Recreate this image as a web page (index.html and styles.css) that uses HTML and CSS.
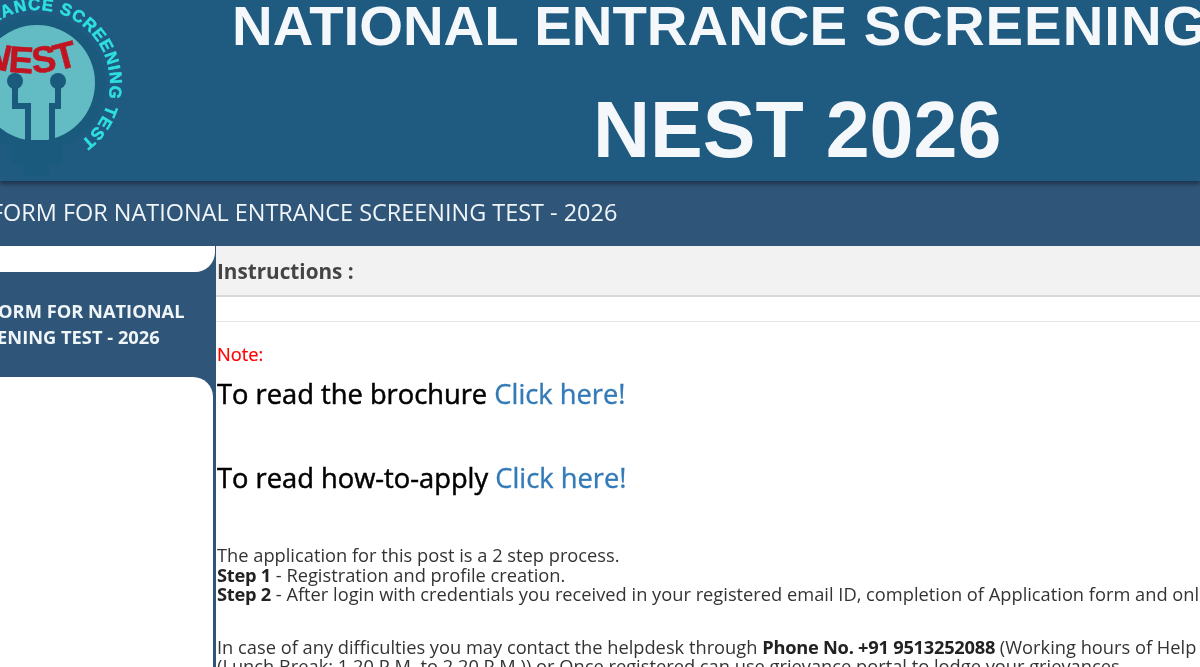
FILE: index.html
```html
<!DOCTYPE html>
<html lang="en">
<head>
<meta charset="utf-8">
<title>NEST 2026</title>
<link rel="stylesheet" href="styles.css">
</head>
<body>
<div class="page">
  <header class="banner">
    <svg class="logo" width="216" height="181" viewBox="0 0 216 181" aria-label="NEST logo">
      <defs>
        <path id="ring" d="M-6 142 A73 73 0 1 1 80 142"/>
        <path id="smile" d="M-18 65 Q35 82 86 62"/>
      </defs>
      <circle cx="37" cy="83" r="68" fill="#1a5a7c"/>
      <circle cx="37" cy="83" r="58" fill="#63bcc4"/>
      <path d="M12 140H62V165H50V175H24V165H12Z" fill="#1a5a7c"/>
      <path d="M15 85V106H28V142M58 85V106H52V142" fill="none" stroke="#1a5a7c" stroke-width="6"/>
      <circle cx="15" cy="81" r="8" fill="#1a5a7c"/>
      <circle cx="58" cy="81" r="8" fill="#1a5a7c"/>
      <text class="logo-ring"><textPath href="#ring" textLength="365">NATIONAL ENTRANCE SCREENING TEST</textPath></text>
      <text class="logo-nest"><textPath href="#smile">NEST</textPath></text>
    </svg>
    <div class="banner-titles">
      <div class="banner-line1">NATIONAL ENTRANCE <span class="wide">SCREENING</span> TEST</div>
      <div class="banner-line2">NEST 2026</div>
    </div>
  </header>
  <div class="titlebar">FORM FOR NATIONAL ENTRANCE SCREENING TEST - 2026</div>
  <div class="columns">
    <aside class="sidebar">
      <div class="side-top"></div>
      <div class="side-active">
        <span class="side-line first">FORM FOR NATIONAL</span>
        <span class="side-line second">SCREENING TEST - 2026</span>
      </div>
      <div class="side-rest"></div>
    </aside>
    <main class="content">
      <div class="panel-head">Instructions :</div>
      <div class="panel-gap"></div>
      <div class="panel-body">
        <div class="note">Note:</div>
        <p class="big first-big">To read the brochure <a href="#">Click here!</a></p>
        <p class="big second-big">To read how-to-apply <a href="#">Click here!</a></p>
        <p class="para">The application for this post is a 2 step process.<br>
        <b>Step 1</b> - Registration and profile creation.<br>
        <b>Step 2</b> - After login with credentials you received in your registered email ID, completion of Application form and online payment.</p>
        <p class="para last">In case of any difficulties you may contact the helpdesk through <b>Phone No. +91 9513252088</b> (Working hours of Help Desk<br>
        (Lunch Break: 1.20 P.M. to 2.20 P.M.)) or Once registered can use grievance portal to lodge your grievances.</p>
      </div>
    </main>
  </div>
</div>
</body>
</html>
```
FILE: styles.css
```css
* { box-sizing: border-box; }
html, body { margin: 0; padding: 0; background: #fff; }
.page {
  width: 1200px;
  height: 667px;
  overflow: hidden;
  font-family: "Open Sans", "Liberation Sans", sans-serif;
  color: #333;
  filter: blur(.4px);
}
.banner {
  display: flex;
  height: 181px;
  background: #1f5a80;
  box-shadow: 0 3px 4px rgba(20, 30, 50, .6);
  position: relative;
}
.logo { flex: none; }
.logo-ring {
  font: bold 17px "Liberation Sans", sans-serif;
  fill: #2fdfe2;
  stroke: #2fdfe2;
  stroke-width: .5px;
}
.logo-nest {
  font: bold 37px "Liberation Sans", sans-serif;
  fill: #c01420;
  stroke: #c01420;
  stroke-width: .6px;
}
.banner-titles {
  flex: none;
  width: 1200px;
  color: #f5f8fa;
  font-family: "Liberation Sans", sans-serif;
  font-weight: bold;
  white-space: nowrap;
}
.banner-line1 {
  font-size: 56.3px;
  line-height: 52px;
  margin-left: 16px;
  word-spacing: 1px;
}
.wide { letter-spacing: 1px; }
.banner-line2 {
  font-size: 79px;
  line-height: 90px;
  margin-top: 33px;
  margin-left: 377px;
}
.titlebar {
  height: 65px;
  line-height: 63px;
  background: #2f5579;
  color: #f0f5f8;
  font-size: 23.44px;
  text-indent: -9px;
  white-space: nowrap;
}
.columns {
  display: flex;
  height: 421px;
}
.sidebar {
  flex: none;
  width: 216px;
  display: flex;
  flex-direction: column;
  background: #2f5579;
}
.side-top {
  height: 26px;
  background: #fff;
  border-bottom-right-radius: 20px;
  margin-right: 1px;
}
.side-active {
  height: 105px;
  padding-top: 26px;
  color: #f0f5f8;
  font-size: 18.3px;
  font-weight: 700;
  line-height: 26px;
  white-space: nowrap;
  overflow: hidden;
}
.side-line { display: block; }
.side-line.first { margin-left: -12px; }
.side-line.second { margin-left: -47px; }
.side-rest {
  flex: 1;
  background: #fff;
  border-top-right-radius: 20px;
  margin-right: 3px;
}
.content { flex: 1; min-width: 0; }
.panel-head {
  height: 51px;
  line-height: 50px;
  padding-left: 1px;
  background: #f2f2f2;
  border-bottom: 2px solid #d8d8d8;
  font-size: 20.7px;
  font-weight: 700;
  color: #444;
}
.panel-gap {
  height: 25px;
  border-bottom: 1px solid #e6e6e6;
}
.panel-body {
  padding: 20px 0 0 1px;
  white-space: nowrap;
  font-size: 18.27px;
  line-height: 19.5px;
}
.note { color: #f00; font-size: 18.27px; line-height: 24px; -webkit-text-stroke: .2px #f00; }
.big {
  margin: 0;
  font-size: 27.3px;
  line-height: 38px;
  color: #000;
  -webkit-text-stroke: .5px #000;
}
.big a { color: #337ab7; text-decoration: none; -webkit-text-stroke: .35px #337ab7; }
.first-big { margin-top: 9px; }
.second-big { margin-top: 46px; }
.para { margin: 0; }
.second-big + .para { margin-top: 48px; }
.para b { color: #222; font-weight: 700; letter-spacing: -.25px; }
.para.last { margin-top: 33px; }
```
